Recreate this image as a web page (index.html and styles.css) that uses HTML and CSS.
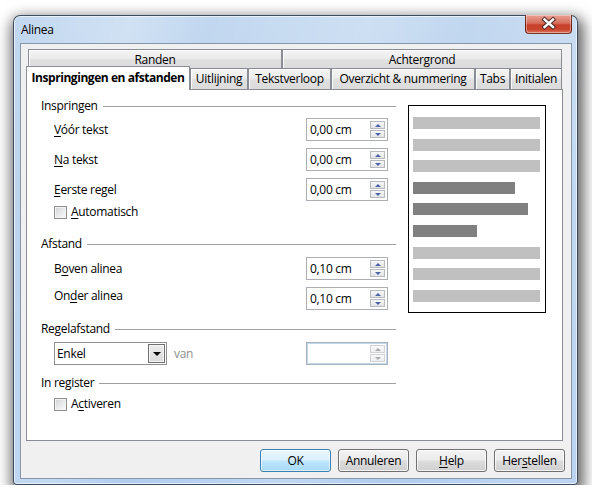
FILE: index.html
```html
<!DOCTYPE html>
<html lang="nl">
<head>
<meta charset="utf-8">
<title>Alinea</title>
<link rel="stylesheet" href="styles.css">
</head>
<body>
<div class="window">
  <div class="titlebar">
    <span class="title">Alinea</span>
    <div class="close" aria-label="Sluiten">
      <svg width="47" height="19" viewBox="0 0 47 19">
        <path d="M19.5 5.5 L28 13 M28 5.5 L19.5 13" stroke="#4b2a26" stroke-width="4.4" stroke-linecap="square" fill="none"/>
        <path d="M19.5 5.5 L28 13 M28 5.5 L19.5 13" stroke="#ffffff" stroke-width="2.4" stroke-linecap="square" fill="none"/>
      </svg>
    </div>
  </div>
  <div class="client">
    <div class="tabs">
      <div class="tabrow row1">
        <div class="tab t-randen">Randen</div>
        <div class="tab t-achter">Achtergrond</div>
      </div>
      <div class="tabrow row2">
        <div class="tab active t-insp">Inspringingen en afstanden</div>
        <div class="tab t-uit">Uitlijning</div>
        <div class="tab t-tekst">Tekstverloop</div>
        <div class="tab t-overz">Overzicht &amp; nummering</div>
        <div class="tab t-tabs">Tabs</div>
        <div class="tab t-init">Initialen</div>
      </div>
      <div class="page">
        <div class="form">
          <div class="group g-insp">Inspringen</div>
          <div class="field f-first">
            <span class="label"><u>V</u>óór tekst</span>
            <div class="spin"><span class="val">0,00 cm</span><span class="arrows"><span class="up"></span><span class="down"></span></span></div>
          </div>
          <div class="field">
            <span class="label"><u>N</u>a tekst</span>
            <div class="spin"><span class="val">0,00 cm</span><span class="arrows"><span class="up"></span><span class="down"></span></span></div>
          </div>
          <div class="field">
            <span class="label"><u>E</u>erste regel</span>
            <div class="spin"><span class="val">0,00 cm</span><span class="arrows"><span class="up"></span><span class="down"></span></span></div>
          </div>
          <div class="check c-auto"><span class="box"></span><span><u>A</u>utomatisch</span></div>

          <div class="group g-afst">Afstand</div>
          <div class="field f-afst">
            <span class="label">B<u>o</u>ven alinea</span>
            <div class="spin"><span class="val">0,10 cm</span><span class="arrows"><span class="up"></span><span class="down"></span></span></div>
          </div>
          <div class="field">
            <span class="label raised">On<u>d</u>er alinea</span>
            <div class="spin"><span class="val">0,10 cm</span><span class="arrows"><span class="up"></span><span class="down"></span></span></div>
          </div>

          <div class="group g-regel">Regelafstand</div>
          <div class="field f-regel">
            <div class="combo-wrap">
              <div class="combo"><span class="val">Enkel</span><span class="drop"><span class="tri"></span></span></div>
              <span class="van">van</span>
            </div>
            <div class="spin disabled"><span class="val"></span><span class="arrows"><span class="up"></span><span class="down"></span></span></div>
          </div>

          <div class="group g-reg">In register</div>
          <div class="check c-act"><span class="box"></span><span>A<u>c</u>tiveren</span></div>
        </div>
        <div class="preview">
          <div class="bar light"></div>
          <div class="bar light"></div>
          <div class="bar light"></div>
          <div class="bar dark" style="width:102px"></div>
          <div class="bar dark" style="width:115px"></div>
          <div class="bar dark" style="width:64px"></div>
          <div class="bar light"></div>
          <div class="bar light"></div>
          <div class="bar light"></div>
        </div>
      </div>
    </div>
    <div class="buttons">
      <button class="btn default">OK</button>
      <button class="btn">Annuleren</button>
      <button class="btn"><u>H</u>elp</button>
      <button class="btn">Her<u>s</u>tellen</button>
    </div>
  </div>
</div>
</body>
</html>
```

FILE: styles.css
```css
* { box-sizing: border-box; }
html, body { margin: 0; padding: 0; background: #ffffff; }
body {
  font-family: "Open Sans", "Noto Sans", sans-serif;
  font-size: 12px;
  letter-spacing: -0.3px;
  color: #000;
}
u { text-decoration: underline; text-underline-offset: 2px; }

.window {
  position: relative;
  width: 565px;
  height: 470px;
  margin: 15px 0 0 13px;
  padding: 0 5px 5px 6px;
  border: 1px solid rgba(38, 52, 70, 0.85);
  border-radius: 7px 7px 4px 4px;
  background:
    linear-gradient(100deg, rgba(255,255,255,0) 0%, rgba(255,255,255,.25) 18%, rgba(255,255,255,0) 30%, rgba(255,255,255,.2) 55%, rgba(255,255,255,0) 70%, rgba(255,255,255,.15) 90%),
    linear-gradient(180deg, #c2d8f0 0%, #b8d0eb 40%, #b0cdee 100%);
  box-shadow: inset 0 0 0 1px rgba(255,255,255,.6), 2px 6px 14px 4px rgba(0,0,0,.6);
  display: flex;
  flex-direction: column;
}

.titlebar {
  height: 27px;
  display: flex;
  align-items: center;
  padding-left: 1px;
}
.title { line-height: 16px; }

.close {
  position: absolute;
  top: -1px;
  right: 5px;
  width: 47px;
  height: 19px;
  border: 1px solid rgba(80, 20, 10, .75);
  border-top: none;
  border-radius: 0 0 4px 4px;
  background: linear-gradient(180deg, #e8a093 0%, #d8705d 45%, #c7412b 55%, #c9452d 80%, #e07a5e 100%);
  box-shadow: inset 0 0 0 1px rgba(255,255,255,.35);
}
.close svg { display: block; margin: -1px 0 0 -1px; }

.client {
  height: 436px;
  border: 1px solid #8797ab;
  background: #f0f0f0;
  padding: 5px 8px 0 5px;
}

.tabs { width: 537px; }
.tabrow { display: flex; margin: 0 1px 0 2px; }
.row1 { height: 19px; }
.row2 { height: 21px; align-items: flex-end; }

.tab {
  height: 100%;
  border: 1px solid #898c95;
  border-bottom: none;
  background: linear-gradient(180deg, #f4f4f4 0%, #ececec 45%, #e0e0e0 55%, #dbdbdb 100%);
  box-shadow: inset 1px 1px 0 rgba(255,255,255,.8);
  display: flex;
  align-items: center;
  justify-content: center;
  white-space: nowrap;
  line-height: 16px;
}
.row1 .tab { padding-top: 1px; }
.t-randen { width: 254px; }
.t-achter { width: 280px; }
.t-uit { width: 58px; }
.t-tekst { width: 83px; }
.t-overz { width: 144px; }
.t-tabs { width: 35px; }
.t-init { width: 52px; }

.tab.active {
  position: relative;
  z-index: 1;
  width: 164px;
  height: 24px;
  margin-left: -2px;
  margin-bottom: -1px;
  background: #ffffff;
  box-shadow: none;
  font-weight: 700;
  letter-spacing: -0.45px;
  padding-bottom: 1px;
}

.page {
  height: 352px;
  border: 1px solid #898c95;
  background: #ffffff;
  padding: 8px 0 0 14px;
  display: grid;
  grid-template-columns: 355px 138px;
  column-gap: 12px;
  align-items: start;
}

.form { display: flex; flex-direction: column; }

.group {
  display: flex;
  align-items: center;
  gap: 5px;
  height: 16px;
  line-height: 16px;
}
.group::after {
  content: "";
  flex: 1;
  border-top: 1px solid #a0a0a0;
}
.g-afst { margin-top: 17px; }
.g-regel { margin-top: 11px; }
.g-reg { margin-top: 10px; }

.field {
  display: flex;
  align-items: center;
  justify-content: space-between;
  height: 23px;
  padding: 0 8px 0 13px;
  margin-top: 7px;
}
.f-first { margin-top: 4px; }
.f-afst { margin-top: 5px; }
.f-regel { margin-top: 5px; }
.label { line-height: 16px; }
.label.raised { margin-bottom: 6px; }

.spin {
  width: 82px;
  height: 23px;
  border: 1px solid #abadb3;
  background: #fff;
  display: flex;
  align-items: center;
  padding-left: 3px;
}
.spin .val { flex: 1; line-height: 16px; }
.arrows {
  width: 15px;
  height: 17px;
  margin-right: 2px;
  display: flex;
  flex-direction: column;
  gap: 1px;
}
.arrows .up, .arrows .down {
  height: 8px;
  border: 1px solid #b6b9be;
  background: linear-gradient(180deg, #f7f7f7, #e3e4e6);
  display: flex;
  align-items: center;
  justify-content: center;
}
.arrows .up::before, .arrows .down::before {
  content: "";
  width: 0;
  height: 0;
  border-left: 3px solid transparent;
  border-right: 3px solid transparent;
}
.arrows .up::before { border-bottom: 3px solid #4a64a6; }
.arrows .down::before { border-top: 3px solid #4a64a6; }

.spin.disabled {
  border-color: #a9b1bb;
  box-shadow: inset 0 0 0 1px #c3d8ef;
}
.spin.disabled .arrows .up, .spin.disabled .arrows .down {
  border-color: #cfd1d4;
  background: linear-gradient(180deg, #f9f9f9, #eeeeee);
}
.spin.disabled .arrows .up::before { border-bottom-color: #a7a9ac; }
.spin.disabled .arrows .down::before { border-top-color: #a7a9ac; }

.combo-wrap { display: flex; align-items: center; gap: 7px; }
.combo {
  width: 113px;
  height: 23px;
  border: 1px solid #8e8f8f;
  background: #fff;
  display: flex;
  align-items: center;
  padding: 1px 1px 1px 2px;
}
.combo .val { flex: 1; line-height: 16px; }
.drop {
  width: 17px;
  height: 100%;
  border: 1px solid #6f6f6f;
  background: linear-gradient(180deg, #ececec, #d9d9d9);
  box-shadow: inset 0 0 0 1px #f6f6f6;
  display: flex;
  align-items: center;
  justify-content: center;
}
.drop .tri {
  width: 0;
  height: 0;
  border-left: 4px solid transparent;
  border-right: 4px solid transparent;
  border-top: 4px solid #000;
  margin-top: 1px;
}
.van { color: #8d8d8d; line-height: 16px; }

.check {
  display: flex;
  align-items: center;
  gap: 4px;
  height: 14px;
  padding-left: 13px;
  line-height: 16px;
}
.c-auto { margin-top: 4px; }
.c-act { margin-top: 6px; }
.check .box {
  width: 13px;
  height: 13px;
  border: 1px solid #8f8f8f;
  background: linear-gradient(135deg, #cfd1d4 0%, #eceded 60%, #f8f8f8 100%);
  box-shadow: inset 0 0 0 1px #f3f3f3;
}

.preview {
  margin-top: 7px;
  height: 208px;
  border: 1px solid #000;
  background: #fff;
  padding: 11px 4px 0 4px;
  display: flex;
  flex-direction: column;
  gap: 9.6px;
}
.bar { height: 12px; width: 127px; }
.bar.light { background: #c0c0c0; }
.bar.dark { background: #808080; }

.buttons {
  display: flex;
  justify-content: flex-end;
  gap: 7px;
  margin: 8px -2px 0 0;
}
.btn {
  width: 71px;
  height: 23px;
  padding: 0;
  font: inherit;
  letter-spacing: inherit;
  color: #000;
  border: 1px solid #707070;
  border-radius: 3px;
  background: linear-gradient(180deg, #f2f2f2 0%, #ebebeb 48%, #dddddd 52%, #cfcfcf 100%);
  box-shadow: inset 0 0 0 1px rgba(255,255,255,.75);
  line-height: 16px;
}
.btn.default {
  border-color: #3c7fb1;
  background: linear-gradient(180deg, #eaf6fd 0%, #d9f0fc 48%, #bee6fd 52%, #a7d9f5 100%);
  box-shadow: inset 0 0 0 1px rgba(255,255,255,.6);
}
```
